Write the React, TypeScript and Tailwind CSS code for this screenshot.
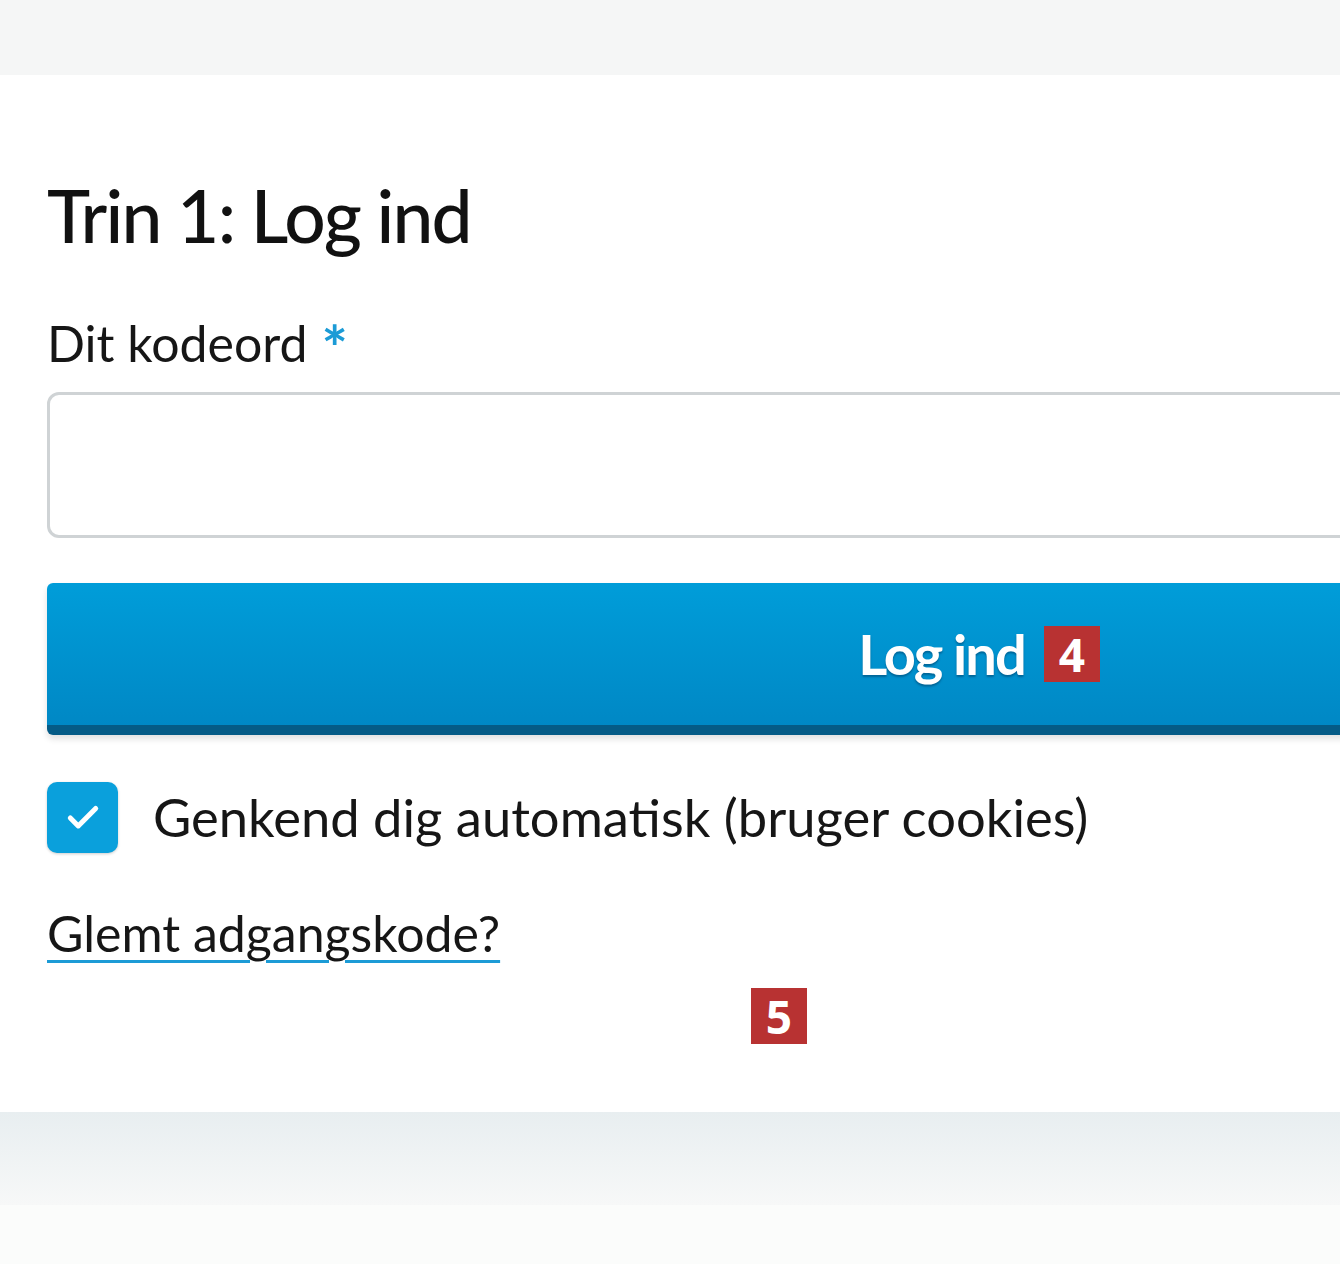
import { Check } from "lucide-react";

const Badge = ({ n }: { n: string }) => (
  <span className="inline-flex h-[56px] w-[56px] items-center justify-center bg-[#b83232] text-[46px] font-bold leading-none text-white font-['Open_Sans',sans-serif]">
    {n}
  </span>
);

export default function App() {
  return (
    <div className="min-h-[1264px] w-[1340px] overflow-hidden bg-[#fbfcfb] font-['Lato',sans-serif] text-[#111]">
      {/* top strip */}
      <div className="h-[75px] bg-[#f5f6f6]" />

      {/* white panel */}
      <div className="relative h-[1037px] bg-white pl-[47px] pt-[104px]">
        <div className="w-[1864px]">
          <h1 className="text-[73px] font-medium leading-none tracking-[-0.025em] text-[#111]">
            Trin 1: Log ind
          </h1>

          <label className="mt-[66px] flex h-[50px] items-start gap-[14px] text-[50px] leading-none text-[#161616]">
            Dit kodeord
            <span className="-mt-[2px] h-[50px] text-[62px] font-bold text-[#1c9bd6]">*</span>
          </label>

          <input
            type="password"
            className="mt-[24px] block h-[146px] w-full rounded-[12px] border-[3px] border-[#cfd3d5] bg-white"
          />

          <button className="mt-[45px] flex h-[152px] w-full items-center justify-center gap-[19px] rounded-[6px] border-b-[10px] border-[#055b86] bg-gradient-to-b from-[#009dd9] to-[#0088c5] shadow-[0_4px_6px_rgba(0,0,0,0.12)]">
            <span className="text-[56px] font-bold leading-none tracking-[-0.035em] text-white [text-shadow:0_2px_2px_rgba(0,60,100,0.5)]">
              Log ind
            </span>
            <Badge n="4" />
          </button>

          <div className="mt-[47px] flex items-center gap-[35px]">
            <span className="flex h-[71px] w-[71px] items-center justify-center rounded-[10px] bg-[#0aa0dc] shadow-[0_1px_3px_rgba(0,0,0,0.2)]">
              <Check className="h-[38px] w-[38px] text-white" strokeWidth={3.2} />
            </span>
            <span className="text-[52.5px] leading-none text-[#161616]">
              Genkend dig automatisk (bruger cookies)
            </span>
          </div>

          <a
            href="#"
            className="mt-[55px] inline-block text-[50px] leading-none text-[#161616] underline decoration-[#1c9bd6] decoration-[3px] underline-offset-[8px]"
          >
            Glemt adgangskode?
          </a>
        </div>

        <div className="absolute left-[751px] top-[913px]">
          <Badge n="5" />
        </div>
      </div>

      {/* bottom fade */}
      <div className="h-[93px] bg-gradient-to-b from-[#e8eef0] to-[#f7f8f8]" />
    </div>
  );
}
